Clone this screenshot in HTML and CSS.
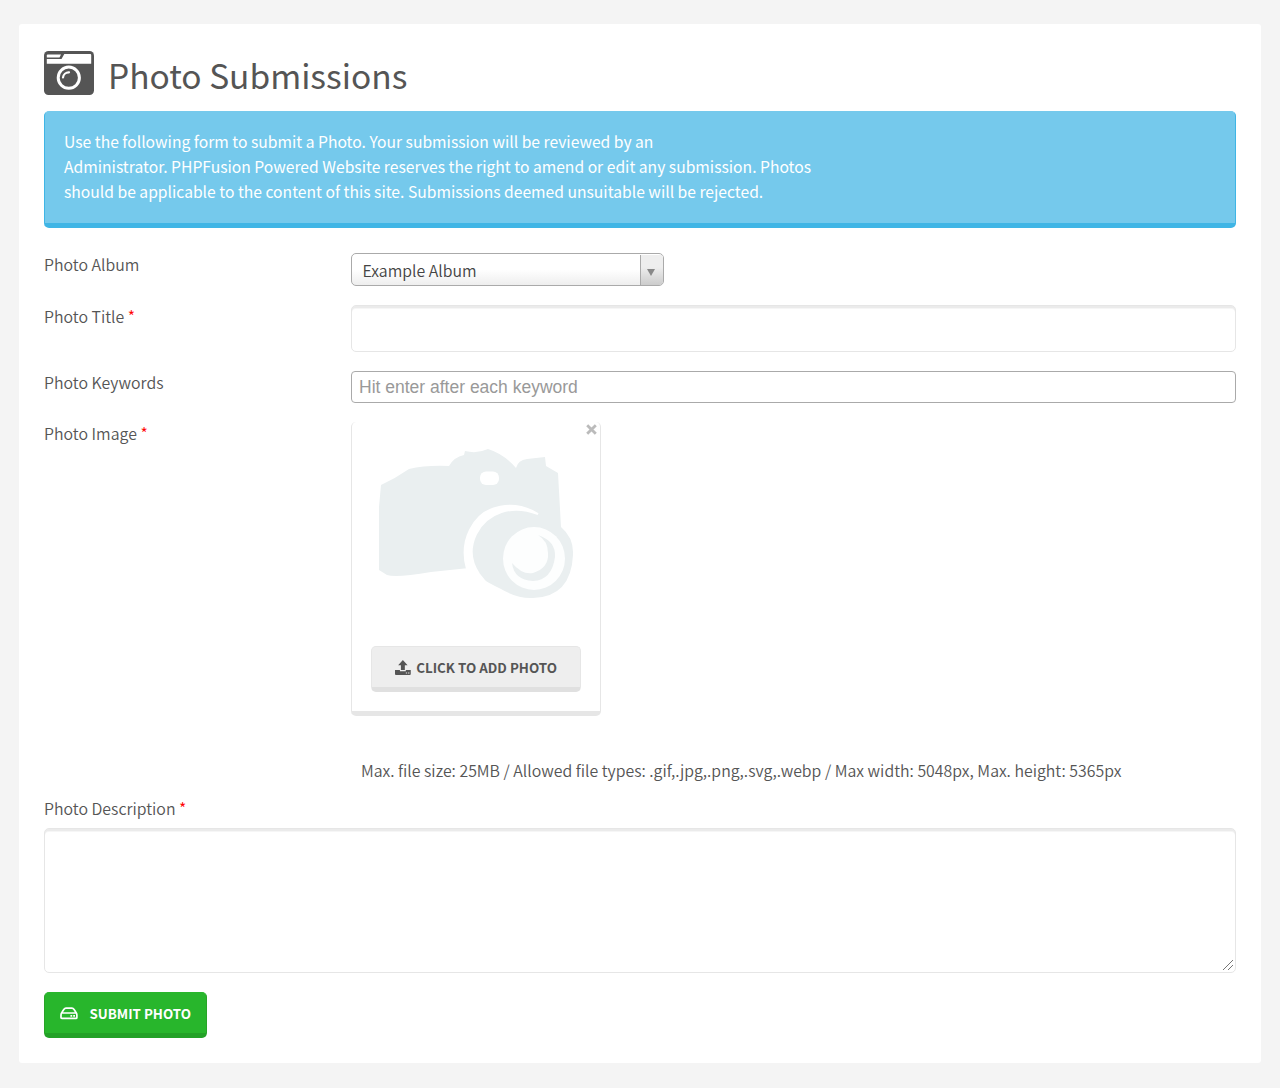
FILE: index.html
```html
<!DOCTYPE html>
<html lang="en">
<head>
<meta charset="utf-8">
<title>Photo Submissions</title>
<link rel="stylesheet" href="styles.css">
</head>
<body>
<main class="panel">
  <header class="heading">
    <svg class="heading-icon" width="50" height="44" viewBox="0 0 50 44">
      <rect width="50" height="44" rx="4.5" fill="#555"/>
      <path d="M2.8 4.500Q2.800 3.600 3.700 3.600H17L15.500 6.600H2.800Z" fill="#fff"/>
      <path d="M2.800 8H17.500L20.300 3H46.300Q47.200 3 47.200 4V12.700H2.800Z" fill="#fff"/>
      <circle cx="24.800" cy="26.700" r="10.600" fill="none" stroke="#fff" stroke-width="3"/>
      <path d="M19 26.500A5.800 5.800 0 0 1 25 21.300" fill="none" stroke="#fff" stroke-width="2.200" stroke-linecap="round"/>
    </svg>
    <h1 class="title">Photo Submissions</h1>
  </header>

  <div class="alert"><p class="alert-text">Use the following form to submit a Photo. Your submission will be reviewed by an<br>Administrator. PHPFusion Powered Website reserves the right to amend or edit any submission. Photos<br>should be applicable to the content of this site. Submissions deemed unsuitable will be rejected.</p></div>

  <form class="form">
    <div class="row row-album">
      <label class="label">Photo Album</label>
      <div class="select">
        <span class="select-value">Example Album</span>
        <span class="select-arrow"><svg width="8" height="7" viewBox="0 0 8 7"><path d="M0 0H8L4 7Z" fill="#888"/></svg></span>
      </div>
    </div>
    <div class="row row-title">
      <label class="label">Photo Title <span class="required">*</span></label>
      <input class="text-input" type="text">
    </div>
    <div class="row row-keywords">
      <label class="label">Photo Keywords</label>
      <div class="tags">Hit enter after each keyword</div>
    </div>
    <div class="row row-image">
      <label class="label">Photo Image <span class="required">*</span></label>
      <div class="upload">
        <svg class="remove" width="11" height="11" viewBox="0 0 11 11"><path d="M1.2 1.2L9.8 9.8M9.8 1.2L1.2 9.8" stroke="#bbb" stroke-width="2.8"/></svg>
        <svg class="camera" width="210" height="204" viewBox="0 0 210 204">
          <path d="M10 54Q25 47 38 38Q55 34 78 35Q83 26 93 24L94 20Q106 23 117 18Q133 23 145 37Q147 29 156 28L174 26L175 35L187 42L190 96Q203 107 202 124Q200 166 162 167Q147 168 130 158Q105 146 98 137L60 141Q25 147 16 144L8 139V76Z" fill="#eaeff0"/>
          <rect x="109" y="40.500" width="19" height="13.500" rx="6" fill="#fff"/>
          <path d="M167 83C141 73 116 81 105 103Q95 124 108 143L116 153L96 142V138Q90 117 99 99C112 72 144 69 167 83Z" fill="#fff" stroke="#fff" stroke-width="2"/>
          <ellipse cx="163" cy="127.500" rx="31" ry="31.500" fill="#fdfefe"/>
          <path d="M167 104Q185 110 184 126Q181 149 162 150Q143 149 141 132Q151 144 162 142Q178 137 177 122Q177 110 167 104Z" fill="#eaeff0"/>
        </svg>
        <button class="btn btn-upload" type="button">
          <svg width="16" height="15" viewBox="0 0 16 15"><path d="M8 0L12.800 5.200H10V10H6V5.200H3.200Z" fill="#555"/><path d="M0 10H5V11.400H11V10H16V14Q16 15 15 15H1Q0 15 0 14Z" fill="#555"/><path d="M11 12.500H12.300V13.500H11ZM13.300 12.500H14.600V13.500H13.300Z" fill="#eee"/></svg>
          <span>CLICK TO ADD PHOTO</span>
        </button>
      </div>
    </div>
    <p class="hint">Max. file size: 25MB / Allowed file types: .gif,.jpg,.png,.svg,.webp / Max width: 5048px, Max. height: 5365px</p>
    <label class="label label-block">Photo Description <span class="required">*</span></label>
    <div class="textarea-wrap">
      <textarea class="textarea"></textarea>
      <svg class="grip" width="12" height="12" viewBox="0 0 12 12"><path d="M1 11L11 1M6 11L11 6" stroke="#666" stroke-width=".9"/></svg>
    </div>
    <button class="btn btn-submit" type="button">
      <svg width="18" height="13" viewBox="0 0 18 13"><path d="M1 8Q1 6.500 2 5.300L4 2.200Q4.700 1 6 1H12Q13.300 1 14 2.200L16 5.300Q17 6.500 17 8V10.500Q17 11.500 16 11.500H2Q1 11.500 1 10.500ZM1.800 6H16.200" fill="none" stroke="#fff" stroke-width="1.700"/><path d="M10.500 8H12.300V9.800H10.500ZM13.300 8H15.100V9.800H13.300Z" fill="#fff"/></svg>
      <span>SUBMIT PHOTO</span>
    </button>
  </form>
</main>
</body>
</html>
```
FILE: styles.css
```css
* {
  box-sizing: border-box;
}

body {
  margin: 0;
  padding: 24px 19px 25px;
  background: #f4f4f4;
  color: #555;
  font: 350 15.88px/25px "Noto Sans CJK SC DemiLight", "Noto Sans CJK SC", sans-serif;
}

.panel {
  height: 1039px;
  padding: 27px 25px 25px;
  border-radius: 3px;
  background: #fff;
}

.heading {
  display: flex;
  gap: 14px;
  height: 60px;
}

.heading-icon {
  flex: none;
}

.title {
  margin: 0;
  font: 400 33.500px/48px "Noto Sans CJK SC", sans-serif;
  white-space: nowrap;
}

.alert {
  height: 117px;
  padding: 17px 19px 0;
  border: 1px solid #3fb5e5;
  border-top-color: #75c9ec;
  border-bottom-width: 5px;
  border-radius: 5px;
  background: #75c9ec;
  color: #fff;
  font: 400 15.67px/25px "Noto Sans CJK SC", sans-serif;
}

.alert-text {
  margin: 0;
  white-space: nowrap;
}

.form {
  padding-top: 25px;
}

.row {
  display: grid;
  grid-template-columns: 307px 1fr;
  align-items: start;
}

.label {
  line-height: 23px;
  white-space: nowrap;
}

.required {
  color: #f00;
}

.row-album {
  height: 52px;
}

.select {
  display: flex;
  width: 313px;
  height: 33px;
  border: 1px solid #aaa;
  border-radius: 5px;
  background: linear-gradient(#fff 50%, #eee);
  color: #444;
  overflow: hidden;
}

.select-value {
  flex: 1;
  padding-left: 10.5px;
  line-height: 33px;
}

.select-arrow {
  display: flex;
  align-items: center;
  justify-content: center;
  width: 23px;
  margin-top: 1px;
  padding: 5px 2px 0 0;
  border-left: 1px solid #aaa;
  background: linear-gradient(#eee 40%, #ccc);
}

.row-title {
  height: 66px;
}

.text-input,
.textarea {
  width: 100%;
  border: 1px solid #e6e6e6;
  border-radius: 5px;
  background: #fff;
  box-shadow: inset 0 2px 0 #ebebeb, inset 0 3px 0 #f6f6f6;
}

.text-input {
  height: 47px;
}

.row-keywords {
  height: 51px;
}

.tags {
  height: 32px;
  padding-left: 7px;
  border: 1px solid #aaa;
  border-radius: 4px;
  color: #999;
  font: 17.500px/30px "Liberation Sans", Arial, sans-serif;
}

.row-image {
  height: 337px;
}

.upload {
  position: relative;
  width: 250px;
  height: 294px;
  padding: 9px 19px 0;
  border: 1px solid #e6e6e6;
  border-top: 0;
  border-bottom-width: 5px;
  border-radius: 5px;
}

.remove {
  position: absolute;
  top: 2px;
  right: 3px;
}

.camera {
  display: block;
  height: 204px;
  margin-bottom: 11px;
}

.btn {
  display: flex;
  align-items: center;
  border-radius: 5px;
  font: 700 13.350px/20px "Noto Sans CJK SC", sans-serif;
  white-space: nowrap;
}

.btn span {
  padding-top: 1px;
}

.btn-upload {
  gap: 5.5px;
  width: 210px;
  height: 46px;
  padding: 0 23px;
  border: 1px solid #e6e6e6;
  border-bottom: 5px solid #e0e0e0;
  background: #eee;
  color: #555;
}

.hint {
  height: 38px;
  margin: 0;
  padding-left: 317px;
  line-height: 23px;
  white-space: nowrap;
}

.label-block {
  display: block;
  height: 31px;
}

.textarea-wrap {
  position: relative;
  height: 145px;
  margin-bottom: 19px;
}

.textarea {
  display: block;
  height: 145px;
  margin: 0;
  resize: none;
}

.grip {
  position: absolute;
  right: 2px;
  bottom: 2px;
}

.btn-submit {
  gap: 11.5px;
  width: 163px;
  height: 46px;
  padding: 0 15px;
  border: 1px solid #28a428;
  border-top-color: #28b62c;
  border-bottom: 5px solid #23a127;
  background: #28b62c;
  color: #fff;
}
```
